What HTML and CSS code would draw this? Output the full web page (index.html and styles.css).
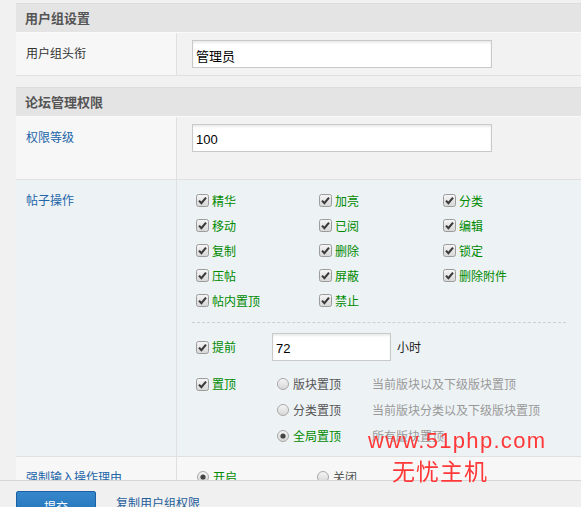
FILE: index.html
```html
<!DOCTYPE html>
<html lang="zh-CN">
<head>
<meta charset="utf-8">
<title>用户组设置</title>
<link rel="stylesheet" href="styles.css">
</head>
<body>
<svg width="0" height="0" class="defs" aria-hidden="true">
  <defs>
    <linearGradient id="boxg" x1="0" y1="0" x2="0" y2="1">
      <stop offset="0" stop-color="#f6f6f6"/>
      <stop offset="1" stop-color="#d6d6d6"/>
    </linearGradient>
    <symbol id="cb" viewBox="0 0 13 13">
      <rect x="0.5" y="0.5" width="12" height="12" rx="2" fill="url(#boxg)" stroke="#9c9c9c"/>
      <path d="M3 6.6 L5.4 9.2 L10 3.6" fill="none" stroke="#3a3a3a" stroke-width="2.1"/>
    </symbol>
    <symbol id="rd" viewBox="0 0 12 12">
      <circle cx="6" cy="6" r="5.5" fill="url(#boxg)" stroke="#a8a8a8"/>
    </symbol>
    <symbol id="rdon" viewBox="0 0 12 12">
      <circle cx="6" cy="6" r="5.5" fill="url(#boxg)" stroke="#a8a8a8"/>
      <circle cx="6" cy="6" r="2.6" fill="#444"/>
    </symbol>
  </defs>
</svg>

<div class="page">
  <section class="group">
    <h3 class="group-title">用户组设置</h3>
    <div class="row">
      <div class="lbl">用户组头衔</div>
      <div class="val"><input class="txt wide" type="text" value="管理员"></div>
    </div>
  </section>

  <section class="group">
    <h3 class="group-title">论坛管理权限</h3>
    <div class="row row-tall">
      <div class="lbl blue">权限等级</div>
      <div class="val"><input class="txt wide" type="text" value="100"></div>
    </div>

    <div class="row row-ops">
      <div class="lbl blue">帖子操作</div>
      <div class="val">
        <div class="ops">
          <span class="ck"><svg><use href="#cb"/></svg>精华</span>
          <span class="ck"><svg><use href="#cb"/></svg>加亮</span>
          <span class="ck"><svg><use href="#cb"/></svg>分类</span>
          <span class="ck"><svg><use href="#cb"/></svg>移动</span>
          <span class="ck"><svg><use href="#cb"/></svg>已阅</span>
          <span class="ck"><svg><use href="#cb"/></svg>编辑</span>
          <span class="ck"><svg><use href="#cb"/></svg>复制</span>
          <span class="ck"><svg><use href="#cb"/></svg>删除</span>
          <span class="ck"><svg><use href="#cb"/></svg>锁定</span>
          <span class="ck"><svg><use href="#cb"/></svg>压帖</span>
          <span class="ck"><svg><use href="#cb"/></svg>屏蔽</span>
          <span class="ck"><svg><use href="#cb"/></svg>删除附件</span>
          <span class="ck"><svg><use href="#cb"/></svg>帖内置顶</span>
          <span class="ck"><svg><use href="#cb"/></svg>禁止</span>
        </div>
        <div class="dash"></div>
        <div class="line-ahead">
          <span class="ck first"><svg><use href="#cb"/></svg>提前</span>
          <input class="txt short" type="text" value="72">
          <span class="unit">小时</span>
        </div>
        <div class="line-top">
          <span class="ck first"><svg><use href="#cb"/></svg>置顶</span>
          <div class="radios">
            <div class="rrow"><span class="rb"><svg><use href="#rd"/></svg>版块置顶</span><span class="desc">当前版块以及下级版块置顶</span></div>
            <div class="rrow"><span class="rb"><svg><use href="#rd"/></svg>分类置顶</span><span class="desc">当前版块分类以及下级版块置顶</span></div>
            <div class="rrow"><span class="rb on"><svg><use href="#rdon"/></svg>全局置顶</span><span class="desc">所有版块置顶</span></div>
          </div>
        </div>
      </div>
    </div>

    <div class="row row-last">
      <div class="lbl blue">强制输入操作理由</div>
      <div class="val">
        <div class="switch">
          <span class="rb on"><svg><use href="#rdon"/></svg>开启</span>
          <span class="rb"><svg><use href="#rd"/></svg>关闭</span>
        </div>
      </div>
    </div>
  </section>
</div>

<div class="footer">
  <button class="btn" type="button">提交</button>
  <a class="copy" href="#">复制用户组权限</a>
</div>

<div class="watermark">
  <div class="wm-url">www.51php.com</div>
  <div class="wm-name">无忧主机</div>
</div>
</body>
</html>
```
FILE: styles.css
```css
html, body {
  margin: 0;
  padding: 0;
}
body {
  background: #f1f1f1;
  font-family: "Noto Sans CJK SC", "Liberation Sans", sans-serif;
  font-size: 12px;
  line-height: 16px;
  color: #333;
  overflow: hidden;
}
.defs {
  position: absolute;
  width: 0;
  height: 0;
}
.page {
  padding: 3px 0 0 16px;
}
.group + .group {
  margin-top: 11px;
}
.group-title {
  margin: 0;
  height: 28px;
  line-height: 28px;
  padding: 0 0 0 9px;
  border-top: 1px solid #dcdcdc;
  border-bottom: 1px solid #fafafa;
  background: #e4e4e4;
  color: #555;
  font-size: 13px;
  font-weight: bold;
}
.row {
  display: grid;
  grid-template-columns: 161px 1fr;
  border-bottom: 1px solid #e0e0e0;
}
.lbl {
  box-sizing: border-box;
  background: #f7f7f7;
  border-right: 1px solid #e0e0e0;
  padding: 12px 10px;
}
.lbl.blue {
  color: #2265a8;
}
.val {
  background: #f2f2f2;
  padding: 7px 15px;
}
.txt {
  box-sizing: border-box;
  height: 28px;
  margin: 0;
  border: 1px solid #c9c9c9;
  box-shadow: inset 0 2px 2px #ececec;
  background: #fff;
  padding: 2px 3px 0;
  font-family: "Liberation Sans", "Noto Sans CJK SC", sans-serif;
  font-size: 13px;
  color: #000;
  outline: none;
}
.txt.wide {
  width: 300px;
}
.txt.short {
  width: 119px;
}
.row-tall .val {
  padding-bottom: 27px;
}
.row-ops .lbl,
.row-ops .val {
  background: #edf2f5;
}
.row-ops .lbl {
  padding-top: 12px;
}
.row-ops .val {
  padding: 8px 15px 7px;
}
.ops {
  display: grid;
  grid-template-columns: 123px 124px 1fr;
  grid-auto-rows: 25px;
}
.ck {
  display: flex;
  align-items: center;
  color: #008a00;
  white-space: nowrap;
}
.ck svg,
.rb svg {
  flex: none;
}
.ck svg {
  width: 13px;
  height: 13px;
  margin: 0 3px 0 4px;
}
.dash {
  margin: 9px 0 10px;
  border-top: 1px dashed #cfcfcf;
}
.line-ahead {
  display: flex;
  align-items: center;
  height: 28px;
}
.ck.first {
  width: 80px;
}
.unit {
  margin-left: 6px;
  color: #222;
}
.line-top {
  display: flex;
  align-items: flex-start;
  margin-top: 10px;
}
.line-top .ck.first {
  height: 26px;
}
.rrow {
  display: flex;
  align-items: center;
  height: 26px;
}
.rb {
  display: flex;
  align-items: center;
  width: 100px;
  color: #555;
  white-space: nowrap;
}
.rb svg {
  width: 12px;
  height: 12px;
  margin: 0 4px 0 5px;
}
.rb.on {
  color: #008a00;
}
.desc {
  color: #999;
  white-space: nowrap;
}
.row-last .lbl,
.row-last .val {
  background: #f7f7f7;
}
.row-last .val {
  padding: 10px 15px;
}
.switch {
  display: flex;
  height: 20px;
  align-items: center;
}
.switch .rb {
  width: 120px;
}
.footer {
  position: fixed;
  left: 0;
  right: 0;
  bottom: 0;
  height: 16px;
  border-top: 1px solid #d6d6d6;
  background: #f0f0f0;
  padding: 10px 0 0 16px;
  display: flex;
  align-items: flex-start;
  overflow: hidden;
}
.btn {
  flex: none;
  width: 80px;
  height: 28px;
  margin: 0;
  border: 1px solid #1c61a3;
  border-radius: 2px;
  background: linear-gradient(#3687cc, #2170b5);
  color: #fff;
  font-family: "Noto Sans CJK SC", sans-serif;
  font-size: 12px;
  line-height: 16px;
  padding: 3px 0 0;
}
.copy {
  margin: 4px 0 0 20px;
  color: #1f5d9b;
  font-size: 12px;
  text-decoration: none;
}
.watermark {
  position: absolute;
  left: 368px;
  top: 427px;
  color: #ff3838;
  pointer-events: none;
}
.wm-url {
  font-family: "Liberation Sans", sans-serif;
  font-size: 22px;
  line-height: 28px;
  letter-spacing: 1.3px;
}
.wm-name {
  margin: 2px 0 0 24px;
  font-family: "Noto Sans CJK SC", sans-serif;
  font-size: 23px;
  line-height: 26px;
  letter-spacing: 1px;
}
```
